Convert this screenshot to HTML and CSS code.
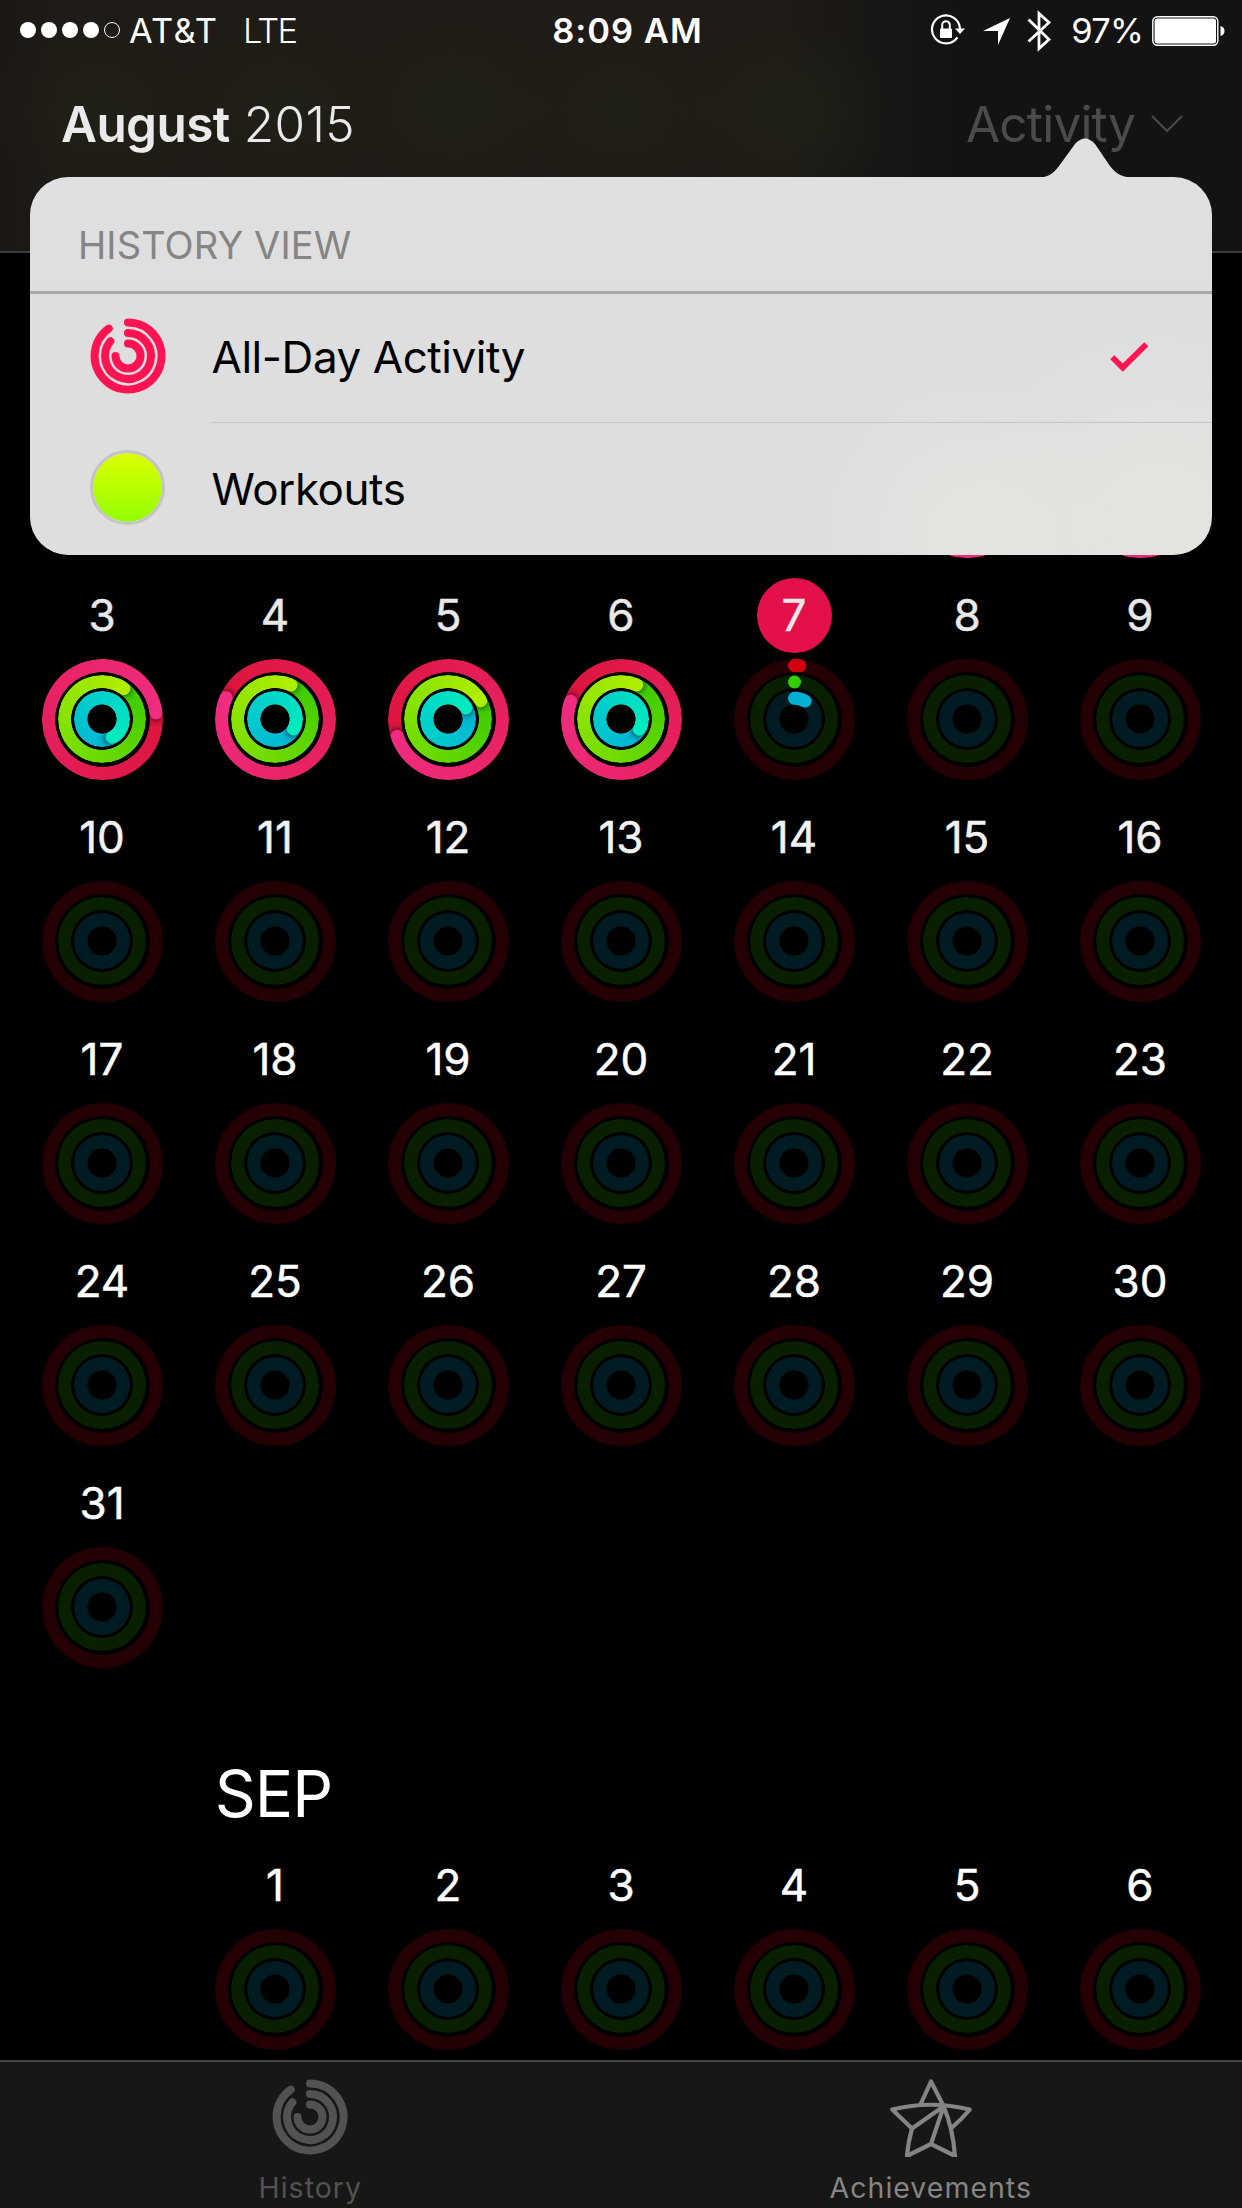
FILE: index.html
```html
<!DOCTYPE html>
<html lang="en">
<head>
<meta charset="utf-8">
<title>Activity</title>
<link rel="stylesheet" href="styles.css">
</head>
<body>
<svg class="defs" aria-hidden="true">
  <symbol id="rings" viewBox="-38 -38 76 76">
    <g fill="none" stroke="currentColor" stroke-width="8" stroke-linecap="round">
      <path d="M0-33.5A33.5 33.5 0 1 1-19.2-27.4"/>
      <path d="M0-23A23 23 0 1 1-17.6-14.8"/>
      <path d="M0-12.5A12.5 12.5 0 1 1-12.5 0"/>
    </g>
  </symbol>
</svg>
<div class="screen">
  <header class="header">
    <div class="status">
      <div class="status-left">
        <span class="signal"><i></i><i></i><i></i><i></i><i class="off"></i></span>
        <span class="carrier">AT&amp;T</span>
        <span class="network">LTE</span>
      </div>
      <div class="time">8:09 AM</div>
      <div class="status-right">
        <svg class="lock" viewBox="0 0 36 34" width="36" height="34">
          <path d="M27.5 24.4A14 14 0 1 1 30 16" fill="none" stroke="#fff" stroke-width="2.2"/>
          <path d="M25 15.5h10l-5 5.5z" fill="#fff"/>
          <rect x="10" y="15.5" width="12" height="9.5" rx="1" fill="#fff"/>
          <path d="M12.2 16v-4a3.8 3.8 0 0 1 7.6 0v4" fill="none" stroke="#fff" stroke-width="2"/>
        </svg>
        <svg class="location" viewBox="0 0 27 27" width="27" height="27"><path d="M27 0L15 27V13H0z" fill="#fff"/></svg>
        <svg class="bluetooth" viewBox="0 0 24 42" width="24" height="42"><path d="M1.5 9.5L22 29.5 12 38.5V3.500L22 12.500 1.500 31.500" fill="none" stroke="#fff" stroke-width="2.8"/></svg>
        <span class="percent">97%</span>
        <svg class="battery" viewBox="0 0 74 30" width="74" height="30">
          <rect x=".8" y=".8" width="65" height="28.400" rx="4.500" fill="none" stroke="#fff" stroke-width="1.400"/>
          <rect x="2.600" y="2.600" width="61.400" height="24.800" rx="2.500" fill="#fff"/>
          <path d="M68.500 10q4 1 4 5t-4 5z" fill="#fff"/>
        </svg>
      </div>
    </div>
    <div class="nav">
      <h1 class="title"><b>August</b><span>2015</span></h1>
      <div class="mode"><span>Activity</span>
        <svg viewBox="0 0 32 18" width="32" height="18"><path d="M1 1L16 16 31 1" fill="none" stroke="currentColor" stroke-width="2"/></svg>
      </div>
    </div>
  </header>

  <main class="calendar" id="calendar"></main>

  <nav class="tabs">
    <div class="tab">
      <svg class="tab-rings" width="76" height="76"><use href="#rings"/></svg>
      <span>History</span>
    </div>
    <div class="tab tab-light">
      <svg viewBox="0 0 84 80" width="84" height="80">
        <g fill="none" stroke="currentColor" stroke-width="4.200" stroke-linejoin="round" stroke-linecap="round">
          <path d="M31.500 27.500L42 4.500 54.700 29.300"/>
          <path d="M23 51.500Q12 41 3.200 32.500 42 23 80.800 32.500 73 42 62.500 51"/>
          <path d="M23 51.500L54.700 29.300 42 67"/>
          <path d="M54.700 29.300Q64 52 66 79L42 67 18 79Q19 66 23 51.500"/>
        </g>
      </svg>
      <span>Achievements</span>
    </div>
  </nav>

  <section class="popover">
    <svg class="arrow" viewBox="0 0 104 40" width="104" height="40"><path d="M0 40C14 40 19 36 25 28L41 6Q51 -5 61 6L76 28C82 36 88 40 104 40z" fill="#e0e0e0"/></svg>
    <h2 class="popover-title">HISTORY VIEW</h2>
    <div class="option">
      <svg class="option-icon" width="76" height="76"><use href="#rings"/></svg>
      <div class="option-body">
        <span>All-Day Activity</span>
        <svg class="check" viewBox="0 0 40 32" width="40" height="32"><path d="M3.300 16.300L13.700 26.600 37.300 3.200" fill="none" stroke="#ff1453" stroke-width="5.800"/></svg>
      </div>
    </div>
    <div class="option">
      <i class="option-icon workout-dot"></i>
      <div class="option-body"><span>Workouts</span></div>
    </div>
  </section>
</div>
<script src="calendar.js"></script>
</body>
</html>
```
FILE: styles.css
```css
* { box-sizing: border-box; }
body {
  margin: 0;
  background: #000;
  color: #fff;
  font-family: Inter, "Liberation Sans", sans-serif;
}
.defs { display: none; }
svg { display: block; flex: none; }
.screen {
  position: relative;
  width: 1242px;
  height: 2208px;
  overflow: hidden;
  display: flex;
  flex-direction: column;
}

/* Header */
.header {
  flex: none;
  height: 253px;
  border-bottom: 2px solid #3c3c3c;
  background:
    radial-gradient(ellipse 110px 90px at 100px 110px, rgba(34, 36, 24, .5), transparent),
    radial-gradient(ellipse 110px 90px at 280px 105px, rgba(34, 36, 24, .5), transparent),
    radial-gradient(ellipse 110px 90px at 455px 105px, rgba(34, 36, 24, .6), transparent),
    radial-gradient(ellipse 110px 90px at 620px 110px, rgba(34, 36, 24, .5), transparent),
    radial-gradient(ellipse 110px 90px at 785px 110px, rgba(34, 36, 24, .6), transparent),
    linear-gradient(90deg, #1b1815 0, #1f1b16 60px, #1f1b16 780px, #131313 960px);
}
.status {
  height: 62px;
  display: grid;
  grid-template-columns: 1fr auto 1fr;
  align-items: center;
  padding: 0 17px 0 20px;
  font-size: 34.500px;
  line-height: 62px;
}
.status-left, .status-right { display: flex; align-items: center; }
.status-right { justify-content: flex-end; }
.signal { display: flex; gap: 5px; margin-bottom: 2px; }
.signal i { width: 16px; height: 16px; border-radius: 50%; background: #fff; }
.signal .off { background: none; border: 1px solid #fff; }
.carrier { margin-left: 9px; width: 114px; letter-spacing: 1.200px; }
.network { font-weight: 300; letter-spacing: -1.800px; }
.time { position: relative; left: 5px; font-weight: 600; letter-spacing: 1px; }
.lock { margin: -3px 17px 0 0; }
.location { margin-right: 17px; }
.bluetooth { margin-right: 20px; }
.percent { margin-right: 9px; letter-spacing: -.8px; }
.battery { margin-right: -1px; }
.nav {
  height: 124px;
  display: flex;
  justify-content: space-between;
  align-items: center;
  padding: 0 59px 0 61px;
  font-size: 49.500px;
  line-height: 124px;
}
.title { display: flex; gap: 14px; margin: 0; font-size: inherit; color: #eaeaea; }
.title b { font-weight: 600; letter-spacing: -.6px; }
.title span { font-weight: 300; letter-spacing: .4px; }
.mode { display: flex; align-items: center; gap: 16px; color: #4b4b4b; }
.mode span { letter-spacing: -.8px; }

/* Month grid */
.calendar { flex: 1; min-height: 0; overflow: hidden; padding: 103px 15.500px 0; }
.month { display: grid; grid-template-columns: repeat(7, 173px); grid-auto-rows: 222px; }
.month-head { display: grid; grid-template-columns: repeat(7, 173px); height: 160px; }
.month-head h2 {
  grid-column: 2;
  margin: 66px 3px 0 0;
  text-align: center;
  font-size: 64px;
  font-weight: 400;
  line-height: 80px;
  letter-spacing: -1px;
}
.day { display: flex; flex-direction: column; align-items: center; gap: 5.500px; }
.num {
  width: 75px;
  height: 75px;
  border-radius: 50%;
  text-align: center;
  font-size: 44px;
  line-height: 75px;
  -webkit-text-stroke: .5px currentColor;
}
.dim { color: #e8e8e8; }
.soft { color: #f2f2f2; }
.today { background: #e4104a; }

/* Activity rings: three concentric bands cut out by a radial mask */
.rings { display: grid; place-items: center; width: 121px; height: 121px; }
.ring {
  grid-area: 1 / 1;
  position: relative;
  width: calc(var(--r) * 2);
  height: calc(var(--r) * 2);
  border-radius: 50%;
  background: var(--track);
  -webkit-mask: radial-gradient(circle, transparent calc(var(--r) - 13.500px), #000 calc(var(--r) - 12.800px));
  mask: radial-gradient(circle, transparent calc(var(--r) - 13.500px), #000 calc(var(--r) - 12.800px));
}
.move { --r: 60.500px; --track: #240004; --from: #dc143c; --to: #f02c80; }
.exercise { --r: 44px; --track: #082000; --from: #3acb00; --to: #b0ee00; }
.stand { --r: 27.700px; --track: #001b21; --from: #00b2d6; --to: #00eabf; }
.full { background: conic-gradient(from var(--tip), var(--from), var(--to)); }
.cap { position: absolute; inset: 0; transform: rotate(var(--tip)); }
.cap::after {
  content: "";
  position: absolute;
  left: calc(50% - 6.600px);
  top: 0;
  width: 13.200px;
  height: 13.200px;
  border-radius: 50%;
  background: var(--to);
  box-shadow: 2px 0 5px rgba(0, 0, 0, .5);
}
.full .cap::before {
  content: "";
  position: absolute;
  z-index: 1;
  left: calc(50% - 9px);
  top: 0;
  width: 9px;
  height: 13.200px;
  background: var(--to);
}
.arcs { grid-area: 1 / 1; z-index: 1; }

/* Tab bar */
.tabs {
  flex: none;
  height: 148px;
  display: grid;
  grid-template-columns: 1fr 1fr;
  border-top: 2px solid #444;
  padding-right: 1px;
  background: #171716;
}
.tab {
  display: flex;
  flex-direction: column;
  align-items: center;
  padding-top: 17px;
  color: #525252;
  font-size: 28.500px;
  line-height: 40px;
  letter-spacing: 1px;
}
.tab svg { height: 80px; margin: -2px 0 11px; }
.tab .tab-rings { height: 76px; margin: 0 1px 13px 0; }
.tab-light { color: #858585; }

/* History view menu */
.popover {
  position: absolute;
  left: 30px;
  top: 177px;
  width: 1182px;
  height: 378px;
  border-radius: 38px;
  color: #000;
  background:
    radial-gradient(circle 150px at 945px 355px, rgba(229, 230, 223, .9) 0, rgba(228, 229, 223, .5) 50%, transparent),
    radial-gradient(circle 190px at 1130px 345px, rgba(229, 230, 223, .9) 0, rgba(228, 229, 223, .5) 50%, transparent),
    linear-gradient(#e0e0e0, #dedede 120px);
}
.arrow { position: absolute; left: 1003.500px; top: -39px; }
.popover-title {
  margin: 0;
  height: 117px;
  padding: 20px 0 0 48px;
  border-bottom: 3px solid #a9a9a9;
  color: #858585;
  font-size: 38px;
  font-weight: 400;
  line-height: 96px;
  letter-spacing: .1px;
}
.option { display: flex; height: 132px; font-size: 44px; letter-spacing: -.45px; }
.option-icon { width: 76px; height: 76px; margin: 23.500px 45px 0 59.500px; color: #ff1453; }
.option-body {
  flex: 1;
  display: flex;
  justify-content: space-between;
  height: 129px;
  padding: 0 63px 0 1px;
  line-height: 126px;
}
.option:nth-of-type(1) .option-body { border-bottom: 1px solid #c5c5c9; }
.check { margin-top: 47px; }
.workout-dot {
  margin-top: 24px;
  width: 75px;
  height: 75px;
  margin-right: 46px;
  border: 3px solid #c4c4c6;
  border-radius: 50%;
  background: linear-gradient(#dcff00, #92ff00) padding-box;
}
```
FILE: calendar.js
```js
const KINDS = ["move", "exercise", "stand"];

// Tip angle of every ring, in degrees, for days whose goals are closed.
const CLOSED = {
  1: [200, 40, 100],
  2: [200, 40, 100],
  3: [83, 35, 151],
  4: [294, 24.5, 119.5],
  5: [252, 60, 60],
  6: [290, 24, 120],
};

const TODAY = 7;
const TODAY_ARCS = `
  <svg class="arcs" viewBox="-60.5 -60.5 121 121" width="121" height="121"
       fill="none" stroke-width="13" stroke-linecap="round">
    <path d="M0-54A54 54 0 0 1 5.3-53.8" stroke="#d2000f"/>
    <path d="M0-37.5h.01" stroke="#34cd00"/>
    <path d="M0-21.2A21.2 21.2 0 0 1 10.6-18.4" stroke="#00b0d3"/>
  </svg>`;

function rings(tips) {
  return KINDS.map((kind, i) =>
    tips
      ? `<div class="ring full ${kind}" style="--tip:${tips[i]}deg"><i class="cap"></i></div>`
      : `<div class="ring ${kind}"></div>`
  ).join("");
}

function day(n, august) {
  const covered = august && n < 3;
  const cls = ["num"];
  if (august && n < 10) cls.push("dim");
  else if (august && n < 17) cls.push("soft");
  if (august && n === TODAY) cls.push("today");
  return `<div class="day">
    <div class="${cls.join(" ")}">${covered ? "" : n}</div>
    <div class="rings">${rings(august && CLOSED[n])}${august && n === TODAY ? TODAY_ARCS : ""}</div>
  </div>`;
}

function month(firstColumn, count, august) {
  let html = "<div></div>".repeat(firstColumn - 1);
  for (let n = 1; n <= count; n++) html += day(n, august);
  return `<div class="month">${html}</div>`;
}

document.getElementById("calendar").innerHTML =
  month(6, 31, true) +
  `<div class="month-head"><h2>SEP</h2></div>` +
  month(2, 6, false);
```
